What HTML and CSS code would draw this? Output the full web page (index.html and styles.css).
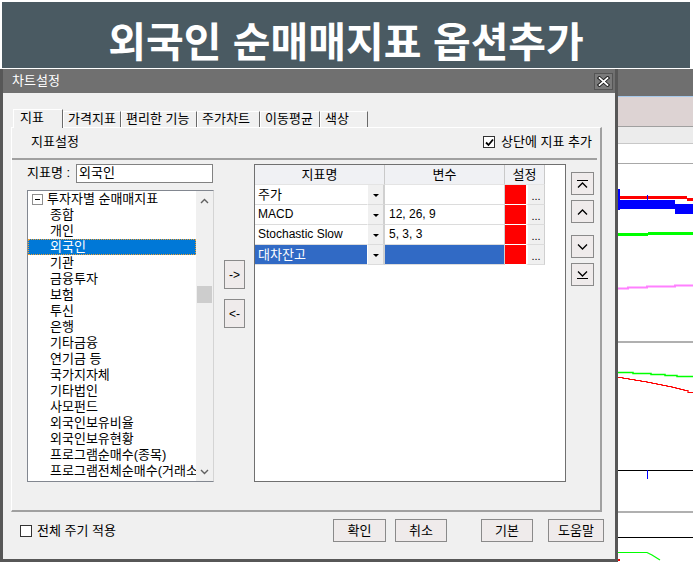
FILE: index.html
```html
<!DOCTYPE html>
<html lang="ko">
<head>
<meta charset="utf-8">
<title>차트설정</title>
<link rel="stylesheet" href="styles.css">
</head>
<body>
<div class="banner"><h1>외국인 순매매지표 옵션추가</h1></div>
<div class="stage">
  <div class="chartwin">
    <svg width="78" height="494" viewBox="0 0 78 494">
      <rect x="0" y="0" width="78" height="494" fill="#ffffff"/>
      <rect x="0" y="0" width="78" height="27" fill="#6f6f6f"/>
      <rect x="0" y="27" width="78" height="1" fill="#a6c8ea"/>
      <rect x="0" y="28" width="78" height="29" fill="#ddd3d3"/>
      <rect x="0" y="57" width="78" height="1" fill="#a0a0a0"/>
      <rect x="0" y="58" width="78" height="16" fill="#ececec"/>
      <rect x="0" y="74" width="78" height="1" fill="#c8c8c8"/>
      <rect x="0" y="94" width="78" height="1" fill="#a8a8a8"/>
      <rect x="3" y="120" width="2" height="21" fill="#0000ff"/>
      <rect x="5" y="127" width="67" height="3" fill="#ff0000"/>
      <rect x="72" y="129" width="6" height="3" fill="#ff0000"/>
      <rect x="5" y="131" width="55" height="9" fill="#0000ff"/>
      <rect x="60" y="135" width="18" height="10" fill="#0000ff"/>
      <rect x="32" y="126" width="1" height="5" fill="#0000ff"/>
      <rect x="3" y="164" width="30" height="3" fill="#00ff00"/>
      <rect x="33" y="163" width="45" height="3" fill="#00ff00"/>
      <polyline points="3,219.5 13,219.5 13,218.5 32,218.5 32,217.5 60,217.5 60,216.5 78,216.5" fill="none" stroke="#ff80ff" stroke-width="2"/>
      <rect x="0" y="272" width="78" height="2" fill="#b0b0b0"/>
      <polyline points="3,303.5 18,303.5 18,304.5 36,304.5 36,305.5 50,305.5 50,306.5 62,306.5 62,307.5 78,307.5" fill="none" stroke="#00ff00" stroke-width="1.5"/>
      <polyline points="3,308.5 8,308.5 8,309.5 14,309.5 14,310.5 20,310.5 20,311.5 26,311.5 26,312.5 32,312.5 32,313.5 37,313.5 37,314.5 42,314.5 42,315.5 47,315.5 47,316.5 52,316.5 52,317.5 57,317.5 57,318.5 61,318.5 61,319.5 65,319.5 65,320.5 69,320.5 69,321.5 73,321.5 73,323.5 78,323.5" fill="none" stroke="#ff0000" stroke-width="1.2"/>
      <rect x="0" y="401" width="78" height="1" fill="#000000"/>
      <rect x="32" y="401" width="1" height="9" fill="#0000ff"/>
      <rect x="0" y="442" width="78" height="2" fill="#b0b0b0"/>
      <rect x="0" y="468" width="78" height="1" fill="#000000"/>
      <polyline points="3,483.5 32,483.5 37,486 45,491" fill="none" stroke="#00ff00" stroke-width="1.2"/>
      <rect x="3" y="490" width="2" height="2" fill="#ff0000"/>
    </svg>
  </div>

  <div class="dialog">
    <div class="titlebar">
      <span class="title">차트설정</span>
      <div class="close">
        <svg width="13" height="11" viewBox="0 0 13 11">
          <path d="M2.5 2 L10.5 9 M10.5 2 L2.5 9" stroke="#1a1a1a" stroke-width="3.6" stroke-linecap="square"/>
          <path d="M2.5 2 L10.5 9 M10.5 2 L2.5 9" stroke="#ffffff" stroke-width="1.7" stroke-linecap="square"/>
        </svg>
      </div>
    </div>
    <div class="client">
      <div class="tabs">
        <div class="tab sel">지표</div>
        <div class="tab w58">가격지표</div>
        <div class="tab w76">편리한 기능</div>
        <div class="tab w63">주가차트</div>
        <div class="tab w60">이동평균</div>
        <div class="tab w48">색상</div>
      </div>
      <div class="panel">
        <div class="head">
          <span>지표설정</span>
          <label class="chk">
            <span class="box on">
              <svg width="9" height="9" viewBox="0 0 9 9"><path d="M1 4.5 L3.5 7 L8 1.5" fill="none" stroke="#000" stroke-width="1.8"/></svg>
            </span>
            <span>상단에 지표 추가</span>
          </label>
        </div>
        <div class="sep"></div>
        <div class="main">
          <div class="leftcol">
            <div class="namerow">
              <span class="lbl">지표명 :</span>
              <div class="input">외국인</div>
            </div>
            <div class="listbox">
              <ul class="tree">
                <li class="root"><span class="minus"></span>투자자별 순매매지표</li>
                <li>종합</li>
                <li>개인</li>
                <li class="selitem">외국인</li>
                <li>기관</li>
                <li>금융투자</li>
                <li>보험</li>
                <li>투신</li>
                <li>은행</li>
                <li>기타금융</li>
                <li>연기금 등</li>
                <li>국가지자체</li>
                <li>기타법인</li>
                <li>사모펀드</li>
                <li>외국인보유비율</li>
                <li>외국인보유현황</li>
                <li>프로그램순매수(종목)</li>
                <li class="clip">프로그램전체순매수(거래소</li>
              </ul>
              <div class="vscroll">
                <svg class="sarrow" width="9" height="6" viewBox="0 0 9 6"><path d="M1 5 L4.5 1.5 L8 5" fill="none" stroke="#606060" stroke-width="1.4"/></svg>
                <div class="thumb"></div>
                <svg class="sarrow down" width="9" height="6" viewBox="0 0 9 6"><path d="M1 1 L4.5 4.5 L8 1" fill="none" stroke="#606060" stroke-width="1.4"/></svg>
              </div>
            </div>
          </div>

          <div class="movecol">
            <div class="btn mv">-&gt;</div>
            <div class="btn mv">&lt;-</div>
          </div>

          <div class="grid">
            <div class="ghead">
              <div class="hc c-name">지표명</div>
              <div class="hc c-var">변수</div>
              <div class="hc c-set">설정</div>
            </div>
            <div class="grow">
              <div class="cell name ko">주가</div>
              <div class="cell dd"><span class="tri"></span></div>
              <div class="cell var"></div>
              <div class="cell red"></div>
              <div class="cell more">...</div>
            </div>
            <div class="grow">
              <div class="cell name">MACD</div>
              <div class="cell dd"><span class="tri"></span></div>
              <div class="cell var">12, 26, 9</div>
              <div class="cell red"></div>
              <div class="cell more">...</div>
            </div>
            <div class="grow">
              <div class="cell name">Stochastic Slow</div>
              <div class="cell dd"><span class="tri"></span></div>
              <div class="cell var">5, 3, 3</div>
              <div class="cell red"></div>
              <div class="cell more">...</div>
            </div>
            <div class="grow selrow">
              <div class="cell name ko">대차잔고</div>
              <div class="cell dd"><span class="tri"></span></div>
              <div class="cell var"></div>
              <div class="cell red"></div>
              <div class="cell more">...</div>
            </div>
          </div>

          <div class="ordercol">
            <div class="btn ob">
              <svg width="13" height="10" viewBox="0 0 13 10"><path d="M1 1.5 H12" stroke="#000" stroke-width="1"/><path d="M2 8.5 L6.5 4 L11 8.5" fill="none" stroke="#000" stroke-width="1.3"/></svg>
            </div>
            <div class="btn ob">
              <svg width="13" height="10" viewBox="0 0 13 10"><path d="M2 7.5 L6.5 3 L11 7.5" fill="none" stroke="#000" stroke-width="1.3"/></svg>
            </div>
            <div class="btn ob gapbig">
              <svg width="13" height="10" viewBox="0 0 13 10"><path d="M2 2.5 L6.5 7 L11 2.5" fill="none" stroke="#000" stroke-width="1.3"/></svg>
            </div>
            <div class="btn ob">
              <svg width="13" height="10" viewBox="0 0 13 10"><path d="M2 1.5 L6.5 6 L11 1.5" fill="none" stroke="#000" stroke-width="1.3"/><path d="M1 8.5 H12" stroke="#000" stroke-width="1"/></svg>
            </div>
          </div>
        </div>
      </div>
      <div class="bottom">
        <label class="chk">
          <span class="box"></span>
          <span>전체 주기 적용</span>
        </label>
        <div class="spacer"></div>
        <div class="btn pb w53">확인</div>
        <div class="btn pb w52 g9">취소</div>
        <div class="btn pb w52 g34">기본</div>
        <div class="btn pb w56 g15">도움말</div>
      </div>
    </div>
  </div>
</div>
</body>
</html>
```

FILE: styles.css
```css
* { box-sizing: border-box; }
html, body { margin: 0; padding: 0; background: #ffffff; }
body {
  width: 693px;
  height: 563px;
  overflow: hidden;
  font-family: "Liberation Sans", "Noto Sans CJK KR", sans-serif;
  font-size: 13px;
  line-height: 16px;
  color: #000;
}

.banner {
  margin: 2px 3px 0 2px;
  height: 66px;
  background: #4a5a62;
  display: flex;
  align-items: center;
  justify-content: center;
  padding-top: 8px;
}
.banner h1 {
  margin: 0;
  font: bold 41px/1 "Noto Sans CJK KR", sans-serif;
  color: #ffffff;
}

.stage {
  position: relative;
  margin-top: 1px;
  height: 494px;
}
.chartwin {
  position: absolute;
  left: 615px;
  top: 0;
  width: 78px;
  height: 494px;
}
.chartwin svg { display: block; }

.dialog {
  position: absolute;
  left: 0;
  top: 0;
  width: 618px;
  height: 493px;
  border-left: 3px solid #575757;
  border-right: 3px solid #575757;
  border-bottom: 3px solid #575757;
  background: #f0f0f0;
  display: flex;
  flex-direction: column;
}
.titlebar {
  height: 24px;
  background: #707070;
  display: flex;
  align-items: center;
  padding-left: 9px;
  padding-right: 2px;
  flex: none;
}
.title {
  color: #ffffff;
  font-size: 13px;
}
.close {
  margin-left: auto;
  width: 19px;
  height: 17px;
  border: 1px solid #555555;
  background: #7a7a7a;
  display: flex;
  align-items: center;
  justify-content: center;
}
.close svg { display: block; }

.client {
  flex: 1;
  background: #f0f0f0;
}

.tabs {
  margin-top: 16px;
  height: 18px;
  padding-left: 10px;
  display: flex;
  align-items: flex-end;
  position: relative;
  z-index: 2;
}
.tab {
  height: 16px;
  border-top: 1px solid #ffffff;
  border-left: 1px solid #ffffff;
  border-right: 1px solid #6a6a6a;
  padding-left: 4px;
  line-height: 14px;
  white-space: nowrap;
  background: #f0f0f0;
}
.tab.sel {
  width: 50px;
  height: 19px;
  margin-bottom: -1px;
  padding-left: 6px;
  padding-top: 1px;
}
.w58 { width: 58px; }
.w76 { width: 76px; }
.w63 { width: 63px; }
.w60 { width: 60px; }
.w48 { width: 48px; }

.panel {
  margin-left: 8px;
  width: 591px;
  height: 385px;
  border-top: 1px solid #ffffff;
  border-left: 1px solid #ffffff;
  border-right: 2px solid #a0a0a0;
  border-bottom: 2px solid #a0a0a0;
}
.head {
  margin-top: 6px;
  height: 16px;
  padding-left: 19px;
  padding-right: 8px;
  display: flex;
  align-items: center;
  justify-content: space-between;
}
.chk {
  display: flex;
  align-items: center;
  gap: 6px;
}
.box {
  width: 12px;
  height: 12px;
  background: #ffffff;
  border: 1px solid #333333;
  display: flex;
  align-items: center;
  justify-content: center;
}
.box svg { display: block; }

.sep {
  margin-top: 8px;
  height: 2px;
  margin-right: 3px;
  background: #a0a0a0;
}
.main {
  margin-top: 4px;
  height: 318px;
  padding-left: 15px;
  display: flex;
}

.leftcol {
  width: 187px;
  flex: none;
}
.namerow {
  height: 18px;
  display: flex;
  align-items: center;
}
.lbl {
  width: 49px;
  white-space: nowrap;
}
.input {
  width: 137px;
  height: 19px;
  border: 1px solid #828282;
  background: #ffffff;
  padding-left: 2px;
  line-height: 16px;
}
.listbox {
  margin-top: 8px;
  height: 292px;
  border: 1px solid #828790;
  border-right-color: #d4d4d4;
  background: #ffffff;
  display: flex;
}
.tree {
  list-style: none;
  margin: 0;
  padding: 0;
  width: 168px;
  flex: none;
  overflow: hidden;
}
.tree li {
  height: 16px;
  line-height: 16px;
  padding-left: 22px;
  white-space: nowrap;
}
.tree li.root {
  padding-left: 4px;
  display: flex;
  align-items: center;
}
.minus {
  width: 11px;
  height: 11px;
  border: 1px solid #8e8e8e;
  background: #ffffff;
  margin-right: 4px;
  position: relative;
  flex: none;
}
.minus::after {
  content: "";
  position: absolute;
  left: 2px;
  top: 4px;
  width: 5px;
  height: 1px;
  background: #000;
}
.tree li.selitem {
  background: #0078d7;
  color: #ffffff;
  outline: 1px dotted #f0a030;
  outline-offset: -1px;
}
.vscroll {
  width: 17px;
  flex: none;
  background: #f0f0f0;
  position: relative;
}
.sarrow {
  position: absolute;
  left: 4px;
  top: 7px;
  display: block;
}
.sarrow.down {
  top: auto;
  bottom: 6px;
}
.thumb {
  position: absolute;
  left: 1px;
  top: 95px;
  width: 15px;
  height: 17px;
  background: #cdcdcd;
}

.btn {
  background: #efebeb;
  border: 1px solid #8a8a8a;
  display: flex;
  align-items: center;
  justify-content: center;
}
.movecol {
  margin-left: 10px;
  width: 21px;
  flex: none;
  padding-top: 96px;
  display: flex;
  flex-direction: column;
  gap: 10px;
}
.btn.mv {
  height: 29px;
  font-size: 12px;
}

.grid {
  margin-left: 9px;
  width: 312px;
  height: 318px;
  flex: none;
  border: 1px solid #707070;
  background: #ffffff;
}
.ghead {
  height: 20px;
  display: flex;
  background: #f0f1f4;
  width: 290px;
}
.hc {
  text-align: center;
  line-height: 19px;
  border-right: 1px solid #c9c9c9;
  border-bottom: 1px solid #e4e4e4;
}
.c-name { width: 130px; }
.c-var { width: 120px; }
.c-set { width: 40px; }
.grow {
  height: 20px;
  display: flex;
  width: 290px;
  font-size: 12px;
}
.cell {
  height: 20px;
  border-bottom: 1px solid #dcdcdc;
  line-height: 19px;
  white-space: nowrap;
}
.cell.ko {
  font-size: 13px;
}
.cell.name {
  width: 112px;
  padding-left: 3px;
}
.cell.dd {
  width: 18px;
  background: #f0f0f0;
  border-right: 2px solid #d0d0d0;
  border-left: 1px solid #ffffff;
  display: flex;
  align-items: center;
  justify-content: center;
}
.tri {
  width: 0;
  height: 0;
  border-left: 3px solid transparent;
  border-right: 3px solid transparent;
  border-top: 3px solid #000;
  margin-top: 2px;
}
.cell.var {
  width: 120px;
  padding-left: 4px;
  border-right: 1px solid #d0d0d0;
}
.cell.red {
  width: 21px;
  background: #ff0000;
  border-bottom-color: #ffffff;
}
.cell.more {
  width: 19px;
  background: #f0f0f0;
  border-left: 2px solid #ffffff;
  border-right: 1px solid #d0d0d0;
  text-align: center;
  line-height: 22px;
  font-size: 11px;
}
.selrow .cell.name,
.selrow .cell.var {
  background: #316ac5;
  color: #ffffff;
}

.ordercol {
  margin-left: 5px;
  width: 23px;
  flex: none;
  padding-top: 8px;
  display: flex;
  flex-direction: column;
  gap: 5px;
}
.btn.ob {
  height: 23px;
}
.btn.ob svg { display: block; }
.gapbig { margin-top: 7px; }

.bottom {
  margin-top: 7px;
  height: 23px;
  padding-left: 17px;
  padding-right: 11px;
  display: flex;
  align-items: center;
}
.bottom .chk {
  gap: 5px;
}
.spacer { flex: 1; }
.btn.pb { height: 23px; }
.w53 { width: 53px; }
.w52 { width: 52px; }
.w56 { width: 56px; }
.g9 { margin-left: 9px; }
.g34 { margin-left: 34px; }
.g15 { margin-left: 15px; }
```
